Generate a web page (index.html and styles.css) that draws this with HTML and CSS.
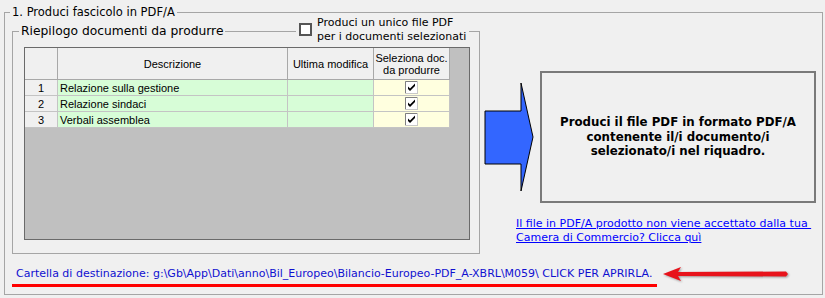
FILE: index.html
```html
<!DOCTYPE html>
<html>
<head>
  <title>Produci fascicolo in PDF/A</title>
  <link rel="stylesheet" href="styles.css">
</head>
<body>
  <fieldset class="frame">
    <legend class="frame-title">1. Produci fascicolo in PDF/A</legend>
    <div class="main">
      <div class="summary-wrap">
        <fieldset class="summary">
          <legend class="summary-title">Riepilogo documenti da produrre</legend>
          <div class="grid">
            <table class="docs">
              <tr class="head">
                <th class="num"></th>
                <th class="desc">Descrizione</th>
                <th class="date">Ultima modifica</th>
                <th class="pick">Seleziona doc.<br>da produrre</th>
              </tr>
              <tr>
                <td class="num">1</td>
                <td class="desc">Relazione sulla gestione</td>
                <td class="date"></td>
                <td class="pick">
                  <svg class="tick" width="13" height="13" viewBox="0 0 13 13"><rect x="0.5" y="0.5" width="12" height="12" fill="#fff" stroke="#c8c8c8"/><path d="M0.5 12V0.5H12" fill="none" stroke="#808080"/><path d="M3 5.5l2 2 5-5v2.5l-5 5-2-2z" fill="#000"/></svg>
                </td>
              </tr>
              <tr>
                <td class="num">2</td>
                <td class="desc">Relazione sindaci</td>
                <td class="date"></td>
                <td class="pick">
                  <svg class="tick" width="13" height="13" viewBox="0 0 13 13"><rect x="0.5" y="0.5" width="12" height="12" fill="#fff" stroke="#c8c8c8"/><path d="M0.5 12V0.5H12" fill="none" stroke="#808080"/><path d="M3 5.5l2 2 5-5v2.5l-5 5-2-2z" fill="#000"/></svg>
                </td>
              </tr>
              <tr>
                <td class="num">3</td>
                <td class="desc">Verbali assemblea</td>
                <td class="date"></td>
                <td class="pick">
                  <svg class="tick" width="13" height="13" viewBox="0 0 13 13"><rect x="0.5" y="0.5" width="12" height="12" fill="#fff" stroke="#c8c8c8"/><path d="M0.5 12V0.5H12" fill="none" stroke="#808080"/><path d="M3 5.5l2 2 5-5v2.5l-5 5-2-2z" fill="#000"/></svg>
                </td>
              </tr>
            </table>
          </div>
        </fieldset>
        <label class="single-pdf">
          <span class="box"></span>
          <span>Produci un unico file PDF<br>per i documenti selezionati</span>
        </label>
      </div>

      <div class="action">
        <div class="action-row">
          <svg class="arrow" width="50" height="112" viewBox="0 0 50 112">
            <polygon points="1,30 37,30 37,2 49,56 37,110 37,83 1,83" fill="#3366ff" stroke="#000" stroke-width="1"/>
          </svg>
          <button class="produce">Produci il file PDF in formato PDF/A<br>contenente il/i documento/i<br>selezionato/i nel riquadro.</button>
        </div>
        <a class="help" href="#">Il file in PDF/A prodotto non viene accettato dalla tua&nbsp;<br>Camera di Commercio? Clicca quì</a>
      </div>
    </div>

    <div class="dest">
      <a class="dest-link" href="#">Cartella di destinazione: g:\Gb\App\Dati\anno\Bil_Europeo\Bilancio-Europeo-PDF_A-XBRL\M059\ CLICK PER APRIRLA.</a>
      <svg class="pointer" width="128" height="18" viewBox="0 0 128 18">
        <polygon points="1,9 19,2 16,7 124,6.5 126,9 124,11.5 16,11 19,16" fill="#e8131b"/>
      </svg>
    </div>
  </fieldset>
</body>
</html>
```

FILE: styles.css
```css
* {
  box-sizing: border-box;
}
body {
  margin: 0;
  background: #f0f0f0;
  font-family: "DejaVu Sans", sans-serif;
  color: #000;
}
.frame {
  margin: 4px 2px 0 4px;
  padding: 0 7px;
  height: 291px;
  border: 1px solid #a5a5a5;
  min-width: 0;
}
.frame-title {
  font-size: 11.5px;
  line-height: 16px;
  padding: 0 2px;
  margin-left: -2px;
}
.main {
  display: flex;
  align-items: flex-start;
}
.summary-wrap {
  position: relative;
  width: 468px;
  margin-top: 2px;
}
.summary {
  margin: 0;
  padding: 0 9px 0 11px;
  height: 232px;
  border: 1px solid #a5a5a5;
  min-width: 0;
}
.summary-title {
  font-size: 12.3px;
  line-height: 18px;
  padding: 0 2px;
  margin-left: -5px;
}
.single-pdf {
  position: absolute;
  top: -6px;
  left: 284px;
  display: flex;
  align-items: center;
  gap: 5px;
  padding: 0 3px;
  background: #f0f0f0;
  font-size: 11px;
  line-height: 13.5px;
}
.single-pdf .box {
  width: 13px;
  height: 13px;
  border: 2px solid #555;
  background: #fff;
}
.grid {
  margin-top: 7px;
  width: 446px;
  height: 193px;
  border: 1px solid #6a6a6a;
  background: #c0c0c0;
}
.docs {
  border-collapse: separate;
  border-spacing: 0;
  table-layout: fixed;
  width: 425px;
  font-family: "Liberation Sans", sans-serif;
  font-size: 11px;
}
.docs th,
.docs td {
  padding: 0;
  border-right: 1px solid #c4c4c4;
  border-bottom: 1px solid #c4c4c4;
  line-height: 14px;
  font-weight: normal;
}
.docs th {
  height: 32px;
  background: #f0f0f0;
  border-color: #a8a8a8;
  line-height: 12px;
  text-align: center;
}
.docs td {
  height: 16px;
}
.docs .num {
  width: 33px;
  text-align: center;
  background: #f0f0f0;
}
.docs .desc {
  width: 230px;
}
.docs .date {
  width: 86px;
}
.docs .pick {
  width: 76px;
}
.docs td.desc {
  padding-left: 2px;
  background: #d7fdd7;
}
.docs td.date {
  background: #d7fdd7;
}
.docs td.pick {
  background: #ffffdf;
}
.tick {
  display: block;
  margin: 0 auto;
}
.action {
  display: flex;
  flex-direction: column;
}
.action-row {
  display: flex;
  align-items: center;
  margin-top: 51px;
  margin-left: 4px;
}
.produce {
  width: 276px;
  height: 132px;
  margin-left: 6px;
  padding: 0;
  border: 2px solid #7a7a7a;
  background: #f0f0f0;
  font-family: "DejaVu Sans", sans-serif;
  font-weight: bold;
  font-size: 11.8px;
  line-height: 14.5px;
  color: #000;
}
.help {
  display: block;
  margin: 14px 0 0 36px;
  font-size: 11px;
  line-height: 14px;
  color: #0000ff;
}
.dest {
  display: flex;
  align-items: flex-start;
  margin-top: 13px;
}
.dest-link {
  padding: 0 5px 4px 4px;
  border-bottom: 3px solid #ff0000;
  font-size: 11px;
  line-height: 13px;
  color: #1010d0;
  text-decoration: none;
  white-space: nowrap;
}
.pointer {
  margin: -2px 0 0 5px;
  filter: drop-shadow(1px 1px 1px rgba(0, 0, 0, 0.35));
}
```
